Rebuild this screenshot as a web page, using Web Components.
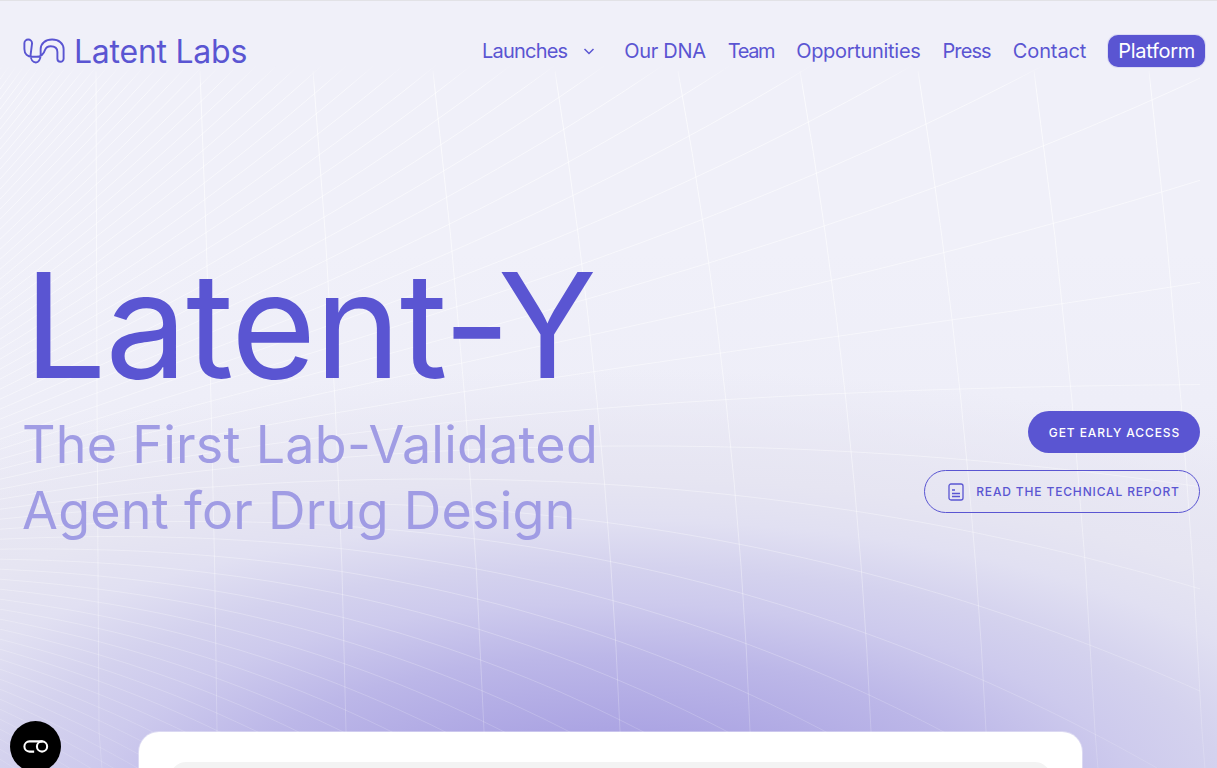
<!DOCTYPE html>
<html lang="en">
<head>
<meta charset="utf-8">
<title>Latent Labs</title>
<style>
    html, body { margin: 0; height: 100%; overflow: hidden; background: #f0f0f9; }
    body { font-family: "Inter", "Liberation Sans", sans-serif; }
</style>
</head>
<body>
<ll-page>
    <ll-nav></ll-nav>
    <ll-hero>
        <span slot="title">Latent-Y</span>
        <span slot="subtitle">The First Lab-Validated<br>Agent for Drug Design</span>
    </ll-hero>
    <ll-preview></ll-preview>
</ll-page>
<ll-badge></ll-badge>

<script>
// gap between two neighbouring curves, it widens towards the right
const spacing = x => 10 + 0.03 * x + 1.5e-5 * x * x + 2e-8 * x * x * x;
// the curve that runs almost flat through the middle
const center = x => 445 + 1.3e-4 * (x - 640) * (x - 640);
// x of each long line at y=70, y=400 and y=730
const MERIDIANS = [[96, 97, 99], [200, 211, 217], [313, 335, 346], [433, 465, 484], [555, 597, 620],
    [678, 726, 750], [800, 846, 871], [918, 961, 986], [1034, 1072, 1095], [1149, 1181, 1202]];

class LlGrid extends HTMLElement {
    constructor() {
        super();
        this.attachShadow({ mode: 'open' });
    }

    connectedCallback() {
        let d = '';
        for (let k = -50; k <= 30; k++) {
            const pts = [];
            for (let x = 0; x <= 1208; x += 16) {
                const y = center(x) + k * spacing(x);
                if (y > -60 && y < 800) pts.push(`${x} ${y.toFixed(1)}`);
            }
            if (pts.length > 1) d += `M${pts.join('L')}`;
        }
        const meridians = MERIDIANS.map(([a, b, c]) => {
            const cx = 2 * b - (a + c) / 2;
            return `M${a} 70Q${cx} 400 ${c} 730L${c + 3} 768`;
        }).join('');

        this.shadowRoot.innerHTML = `
            <style>
                :host {
                    display: block;
                    position: absolute;
                    inset: 0;
                    pointer-events: none;
                    -webkit-mask-image: linear-gradient(#0000 62px, #000 86px);
                    mask-image: linear-gradient(#0000 62px, #000 86px);
                }
                svg { display: block; }
            </style>
            <svg width="1217" height="768" viewBox="0 0 1217 768" fill="none">
                <defs>
                    <linearGradient id="fade" gradientUnits="userSpaceOnUse" x1="0" y1="70" x2="0" y2="768">
                        <stop offset="0" stop-color="#fff" stop-opacity=".7"/>
                        <stop offset=".5" stop-color="#fff" stop-opacity=".5"/>
                        <stop offset="1" stop-color="#fff" stop-opacity=".16"/>
                    </linearGradient>
                </defs>
                <path d="${d}" stroke="url(#fade)" stroke-width=".85"/>
                <path d="${meridians}" stroke="url(#fade)" stroke-width="1"/>
            </svg>
        `;
    }
}

class LlPage extends HTMLElement {
    constructor() {
        super();
        this.attachShadow({ mode: 'open' }).innerHTML = `
            <style>
                :host {
                    display: flex;
                    flex-direction: column;
                    position: relative;
                    box-sizing: border-box;
                    height: 768px;
                    overflow: hidden;
                    border-top: 1px solid #e2e2e6;
                    background:
                        radial-gradient(ellipse 950px 360px at 610px 800px,
                            #a59ee0 0, #aca5e3 20%, #bcb7e8 40%, #cdcaed 55%, #d4d2ee 65%,
                            #e1e0f2 78%, #e6e5f2 90%, rgba(232, 231, 244, 0) 120%),
                        linear-gradient(#f0f0f9 0, #f0f0f9 250px, #eeeef8 400px, #e9e8f4 560px, #e6e5f1 768px);
                }
                ::slotted(*) { position: relative; }
            </style>
            <ll-grid></ll-grid>
            <slot></slot>
        `;
    }
}

class LlNav extends HTMLElement {
    constructor() {
        super();
        const links = [['Our DNA', -0.3], ['Team', -1.4], ['Opportunities', -0.3], ['Press', -0.9], ['Contact', -0.1]];
        this.attachShadow({ mode: 'open' }).innerHTML = `
            <style>
                :host {
                    display: flex;
                    flex: none;
                    justify-content: space-between;
                    align-items: center;
                    height: 66px;
                    padding: 0 12px 0 22px;
                    margin-top: 17px;
                    color: #5a55d2;
                }
                .brand {
                    display: flex;
                    align-items: center;
                    gap: 8px;
                    font-size: 32px;
                    letter-spacing: -0.25px;
                }
                .brand svg { display: block; }
                nav {
                    display: flex;
                    align-items: center;
                    gap: 22px;
                    font-size: 20px;
                }
                .launches {
                    display: flex;
                    align-items: center;
                    gap: 16px;
                    margin-right: 7px;
                    letter-spacing: -0.8px;
                }
                .platform {
                    padding: 4px 10px;
                    background: #5a55d2;
                    color: #fff;
                    border-radius: 10px;
                    box-shadow: 0 0 0 1px #dcdcf4;
                    letter-spacing: -0.3px;
                }
            </style>
            <div class="brand">
                <svg width="44" height="28" viewBox="21 36 46 28" fill="none" stroke="#5a55d2" stroke-width="2">
                    <path d="M31.500 42a4 4 0 0 0-8 0V48c0 5 3.500 8 8 8H36c5 0 8-3.500 9-7c1-2.500 3-4 6-4c4 0 7 2 7 6V58a3.250 3.250 0 0 0 6.500 0V48c0-6-5-10-12-10c-7 0-12 4-12 10V54c0 5-2.500 8-5 8c-3 0-5.500-3-5.500-8Z"/>
                </svg>
                <span>Latent Labs</span>
            </div>
            <nav>
                <span class="launches">Launches
                    <svg width="12" height="7" viewBox="0 0 12 7" fill="none" stroke="#5a55d2" stroke-width="1.5"><path d="M1.500 1l4.500 4.500L10.500 1"/></svg>
                </span>
                ${links.map(([label, ls]) => `<span style="letter-spacing:${ls}px">${label}</span>`).join('')}
                <span class="platform">Platform</span>
            </nav>
        `;
    }
}

class LlHero extends HTMLElement {
    constructor() {
        super();
        this.attachShadow({ mode: 'open' }).innerHTML = `
            <style>
                :host {
                    display: flex;
                    flex: none;
                    justify-content: space-between;
                    height: 648px;
                    padding: 0 17px 0 22px;
                    box-sizing: border-box;
                }
                .copy { padding-top: 154px; }
                h1 {
                    margin: 0 0 0 2px;
                    font-size: 146px;
                    line-height: 174px;
                    font-weight: 420;
                    letter-spacing: -1.300px;
                    color: #5a55d2;
                }
                h2 {
                    margin: 0;
                    font-size: 52px;
                    line-height: 66px;
                    font-weight: 400;
                    letter-spacing: 0.25px;
                    color: #a09ce4;
                }
                .actions {
                    display: flex;
                    flex-direction: column;
                    align-items: flex-end;
                    gap: 17px;
                    padding-top: 327px;
                }
                .btn {
                    display: flex;
                    align-items: center;
                    justify-content: center;
                    box-sizing: border-box;
                    height: 42px;
                    border-radius: 22px;
                    font-size: 12px;
                    font-weight: 500;
                    letter-spacing: 0.9px;
                    text-transform: uppercase;
                }
                .solid { width: 172px; padding-left: 1px; background: #5a55d2; color: #fff; }
                .outline {
                    width: 276px;
                    height: 43px;
                    gap: 12px;
                    padding-left: 4px;
                    border: 1px solid #5a55d2;
                    color: #5a55d2;
                    letter-spacing: 0.85px;
                }
                .outline svg { display: block; }
            </style>
            <div class="copy">
                <h1><slot name="title"></slot></h1>
                <h2><slot name="subtitle"></slot></h2>
            </div>
            <div class="actions">
                <div class="btn solid">Get early access</div>
                <div class="btn outline">
                    <svg width="16" height="18" viewBox="0 0 16 18" fill="none" stroke="#5a55d2" stroke-width="1.3">
                        <rect x="1" y="1" width="14" height="16" rx="2"/>
                        <path d="M4 7h3M4 10.500h8M4 13.500h8"/>
                    </svg>
                    <span>Read the technical report</span>
                </div>
            </div>
        `;
    }
}

class LlPreview extends HTMLElement {
    constructor() {
        super();
        this.attachShadow({ mode: 'open' }).innerHTML = `
            <style>
                :host {
                    display: block;
                    flex: none;
                    box-sizing: border-box;
                    height: 300px;
                    margin: 0 135px 0 139px;
                    padding: 30px 31px;
                    background: #fff;
                    border-radius: 20px;
                    box-shadow: 0 0 0 1px rgba(255, 255, 255, .35);
                }
                .inner { height: 200px; background: #f3f3f3; border-radius: 16px; }
            </style>
            <div class="inner"></div>
        `;
    }
}

class LlBadge extends HTMLElement {
    constructor() {
        super();
        this.attachShadow({ mode: 'open' }).innerHTML = `
            <style>
                :host {
                    display: flex;
                    align-items: center;
                    justify-content: center;
                    position: fixed;
                    left: 10px;
                    top: 721px;
                    width: 51px;
                    height: 51px;
                    border-radius: 50%;
                    background: #000;
                }
                svg { display: block; }
            </style>
            <svg width="26" height="13" viewBox="0 0 28 14" fill="none" stroke="#fff" stroke-width="2.200">
                <path d="M12 12.500H7a5.500 5.500 0 0 1 0-11H21"/>
                <circle cx="20.500" cy="7" r="5.500"/>
            </svg>
        `;
    }
}

customElements.define('ll-grid', LlGrid);
customElements.define('ll-page', LlPage);
customElements.define('ll-nav', LlNav);
customElements.define('ll-hero', LlHero);
customElements.define('ll-preview', LlPreview);
customElements.define('ll-badge', LlBadge);
</script>
</body>
</html>
